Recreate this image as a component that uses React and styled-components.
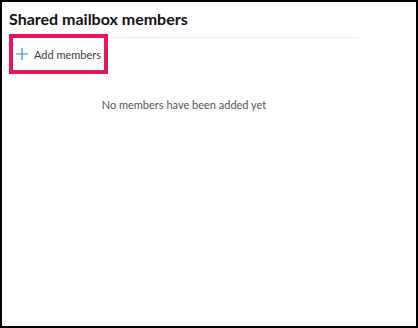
import React from "react";
import styled, { createGlobalStyle } from "styled-components";

const GlobalStyle = createGlobalStyle`
  html, body {
    margin: 0;
    padding: 0;
    background: #ffffff;
  }
  body {
    font-family: Lato, "Liberation Sans", sans-serif;
  }
`;

const Frame = styled.div`
  box-sizing: border-box;
  width: 418px;
  height: 328px;
  border: 2px solid #000;
  background: #fff;
  padding: 5px 0 0 7px;
`;

const Title = styled.h1`
  margin: 0;
  font-size: 16px;
  font-weight: 700;
  color: #111;
  line-height: 24px;
`;

const Section = styled.div`
  width: 350px;
  margin-top: 6px;
  border-top: 1px solid #ececec;
`;

const Highlight = styled.div`
  display: inline-flex;
  margin: -4px 0 0 0;
  border: 4px solid #e8175d;
`;

const AddButton = styled.button`
  display: flex;
  align-items: center;
  gap: 6px;
  height: 32px;
  padding: 0 3px 0 3px;
  border: none;
  background: #fff;
  font-family: inherit;
  font-size: 11px;
  color: #3b3b3b;
  cursor: pointer;
`;

const Empty = styled.p`
  margin: 24px 0 0;
  text-align: center;
  font-size: 11px;
  color: #555;
`;

const PlusIcon = () => (
  <svg width="12" height="12" viewBox="0 0 12 12">
    <path d="M6 0v12M0 6h12" stroke="#3a86c8" strokeWidth="1.2" fill="none" />
  </svg>
);

export default function App() {
  return (
    <>
      <GlobalStyle />
      <Frame>
        <Title>Shared mailbox members</Title>
        <Section>
          <Highlight>
            <AddButton>
              <PlusIcon />
              Add members
            </AddButton>
          </Highlight>
          <Empty>No members have been added yet</Empty>
        </Section>
      </Frame>
    </>
  );
}
